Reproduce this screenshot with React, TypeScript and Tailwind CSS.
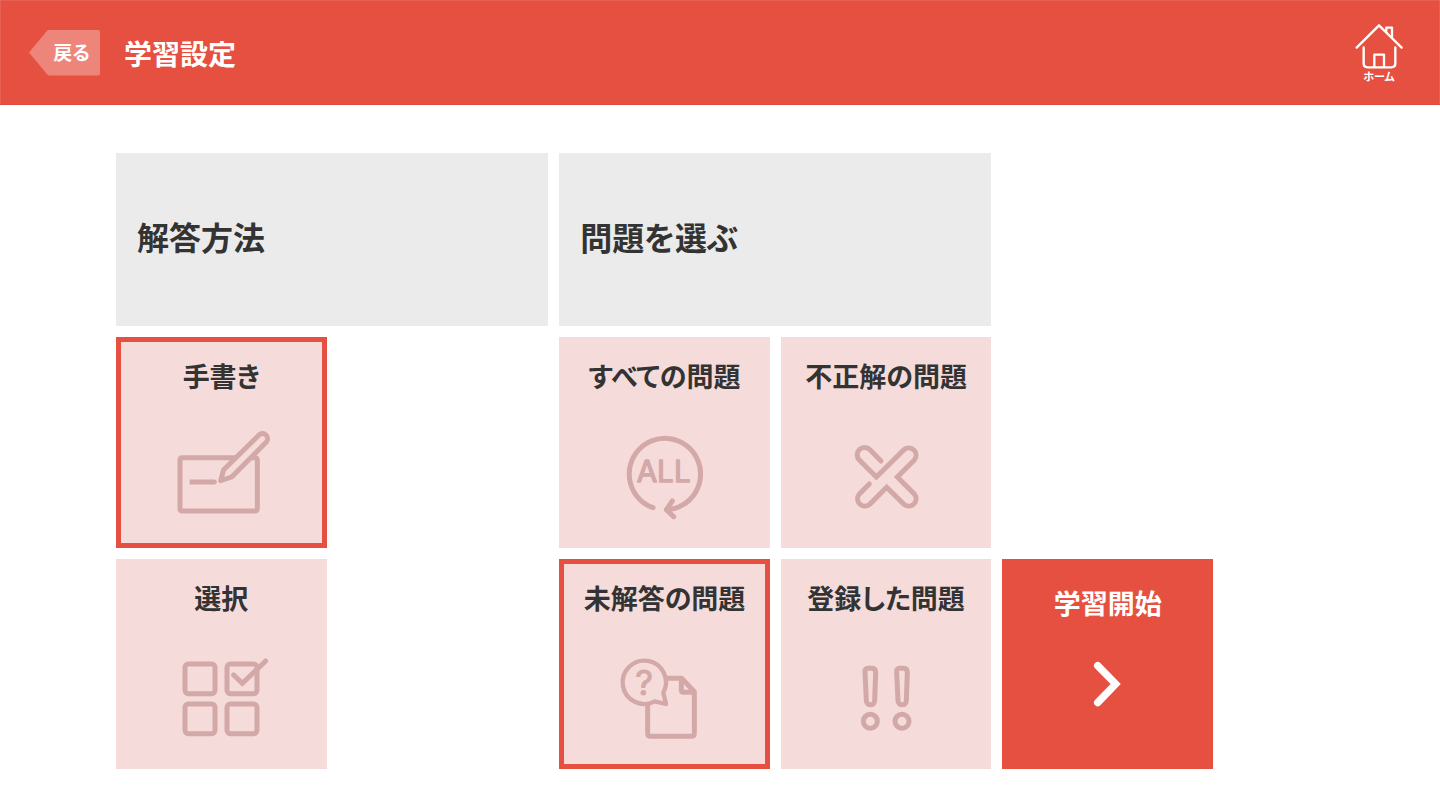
import { useState, type ReactNode } from "react";

interface Option { id: string; label: string; icon: ReactNode; }

const iconClass = "mt-7 size-[100px] shrink-0 fill-none stroke-[#d3a9a7]";

const HandwritingIcon = () => (
  <svg viewBox="0 0 300 300" className={iconClass} strokeWidth={15} strokeLinejoin="round" aria-hidden="true">
    <rect x="27" y="101" width="232" height="160" rx="6" />
    <path d="M149 170L158 137L263 34A14 14 0 0 1 286 54L182 159Z" className="fill-[#f6dbdb]" />
    <path d="M56 174H124" />
    <path d="M124 174H130" strokeLinecap="round" />
  </svg>
);

const SelectIcon = () => (
  <svg viewBox="0 0 300 300" className={iconClass} strokeWidth={15} aria-hidden="true">
    <rect x="42" y="54" width="90" height="89" rx="10" />
    <rect x="168" y="54" width="90" height="89" rx="10" />
    <rect x="42" y="174" width="90" height="89" rx="10" />
    <rect x="168" y="174" width="90" height="89" rx="10" />
    <path d="M188 87L214 112L284 45" strokeLinecap="round" />
  </svg>
);

const AllIcon = () => (
  <svg viewBox="0 0 300 300" className={iconClass} strokeWidth={15} strokeLinecap="round" strokeLinejoin="round" aria-hidden="true">
    <path d="M117 251A107 107 0 1 1 158 257" />
    <path d="M175 231L157 257L179 278" />
    <text x="149" y="174" textAnchor="middle" fontSize="89" strokeWidth="4" className="fill-[#d3a9a7] font-['Inter',sans-serif] font-normal">ALL</text>
  </svg>
);

const WrongIcon = () => (
  <svg viewBox="0 0 300 300" className={iconClass} strokeWidth={15} strokeLinecap="round" aria-hidden="true">
    <path d="M135 111L102 77A22 22 0 0 0 70 108L121 159L204 77A22 22 0 0 1 235 108L184 159L235 210A22 22 0 0 1 204 241L152 190L101 241A22 22 0 0 1 70 210L100 180" />
  </svg>
);

const UnansweredIcon = () => (
  <svg viewBox="0 0 300 300" className={iconClass} strokeWidth={15} strokeLinejoin="round" aria-hidden="true">
    <path d="M158 97H203L241 137V262Q241 271 232 271H110Q101 271 101 262V178" />
    <path d="M202 97V131Q202 139 210 139H241" />
    <path d="M148 140A65 65 0 1 0 122 166L156 174Z" strokeWidth={13} />
    <text x="90" y="147" textAnchor="middle" fontSize="104" strokeWidth="3" className="fill-[#d3a9a7] font-['Inter',sans-serif] font-normal">?</text>
  </svg>
);

const RegisteredIcon = () => (
  <svg viewBox="0 0 300 300" className={iconClass} strokeWidth={15} aria-hidden="true">
    {[0, 95].map((x) => (
      <g key={x} transform={`translate(${x} 0)`}>
        <path d="M96 67H108Q119 67 119 79L116 164A12 12 0 0 1 91 164L87 79Q86 67 96 67Z" />
        <circle cx="103" cy="226" r="21" />
      </g>
    ))}
  </svg>
);

const methods: Option[] = [
  { id: "handwriting", label: "手書き", icon: <HandwritingIcon /> },
  { id: "select", label: "選択", icon: <SelectIcon /> },
];

const questions: Option[] = [
  { id: "all", label: "すべての問題", icon: <AllIcon /> },
  { id: "wrong", label: "不正解の問題", icon: <WrongIcon /> },
  { id: "unanswered", label: "未解答の問題", icon: <UnansweredIcon /> },
  { id: "registered", label: "登録した問題", icon: <RegisteredIcon /> },
];

interface GroupProps { name: string; title: string; options: Option[]; value: string; onChange: (id: string) => void; single?: boolean; }

function OptionGroup({ name, title, options, value, onChange, single }: GroupProps) {
  return (
    <section role="radiogroup" aria-labelledby={name + "-title"} className="col-span-2 grid grid-cols-2 gap-[11px]">
      <div className="col-span-2 flex h-[173px] items-center bg-[#ebebeb] px-[21px] pb-2">
        <h2 id={name + "-title"} className="text-[32px] leading-10 font-bold">{title}</h2>
      </div>
      {options.map((o) => (
        <label key={o.id} className={"relative flex aspect-square cursor-pointer flex-col items-center border-[5px] bg-[#f6dbdb] pt-3.5 " + (single ? "col-start-1 " : "") + (value === o.id ? "border-[#e65041]" : "border-[#f6dbdb]")}>
          <input type="radio" name={name} value={o.id} checked={value === o.id} onChange={() => onChange(o.id)} className="sr-only" />
          <span className="text-[27px] leading-10 font-bold whitespace-nowrap">{o.label}</span>
          {o.icon}
        </label>
      ))}
    </section>
  );
}

export default function App() {
  const [method, setMethod] = useState("handwriting");
  const [question, setQuestion] = useState("unanswered");
  return (
    <div lang="ja" className="min-h-screen bg-white font-['Noto_Sans_CJK_JP',sans-serif] text-[#333] [font-feature-settings:'palt']">
      <header className="flex h-[105px] items-center border border-[#e86054] border-b-[#de4a3b] bg-[#e65041] pr-[35px] pl-7 text-white">
        <button type="button" className="h-[46px] w-[71px] rounded-xs bg-[#ed857b] pl-3.5 text-[19px] font-bold [clip-path:polygon(0_50%,27%_0,100%_0,100%_100%,27%_100%)]">戻る</button>
        <h1 className="ml-6 text-[28px] leading-10 font-bold">学習設定</h1>
        <a href="#home" className="ml-auto flex flex-col items-center">
          <svg viewBox="0 0 150 150" className="size-[50px] fill-none stroke-white" strokeWidth={7} strokeLinecap="round" strokeLinejoin="round" aria-hidden="true">
            <path d="M8 77L75 10L143 77" />
            <path d="M29 76V124Q29 136 41 136H112Q124 136 124 124V76" />
            <path d="M61 134V98H90V134M97 26V17H114V43" />
          </svg>
          <span className="-mt-0.5 mb-0.5 text-[11px] leading-3 font-bold">ホーム</span>
        </a>
      </header>
      <main className="grid grid-cols-5 gap-[11px] pt-12 pr-[227px] pb-10 pl-[116px]">
        <OptionGroup name="method" title="解答方法" options={methods} value={method} onChange={setMethod} single />
        <OptionGroup name="question" title="問題を選ぶ" options={questions} value={question} onChange={setQuestion} />
        <button type="button" className="flex aspect-square cursor-pointer flex-col items-center self-end bg-[#e65041] pt-6 text-white">
          <span className="text-[27px] leading-10 font-bold whitespace-nowrap">学習開始</span>
          <svg viewBox="0 0 300 300" className="mt-6 size-[100px] shrink-0 fill-none stroke-white" strokeWidth={22} strokeLinecap="round" aria-hidden="true">
            <path d="M119 56L173 111L119 167" />
          </svg>
        </button>
      </main>
    </div>
  );
}
